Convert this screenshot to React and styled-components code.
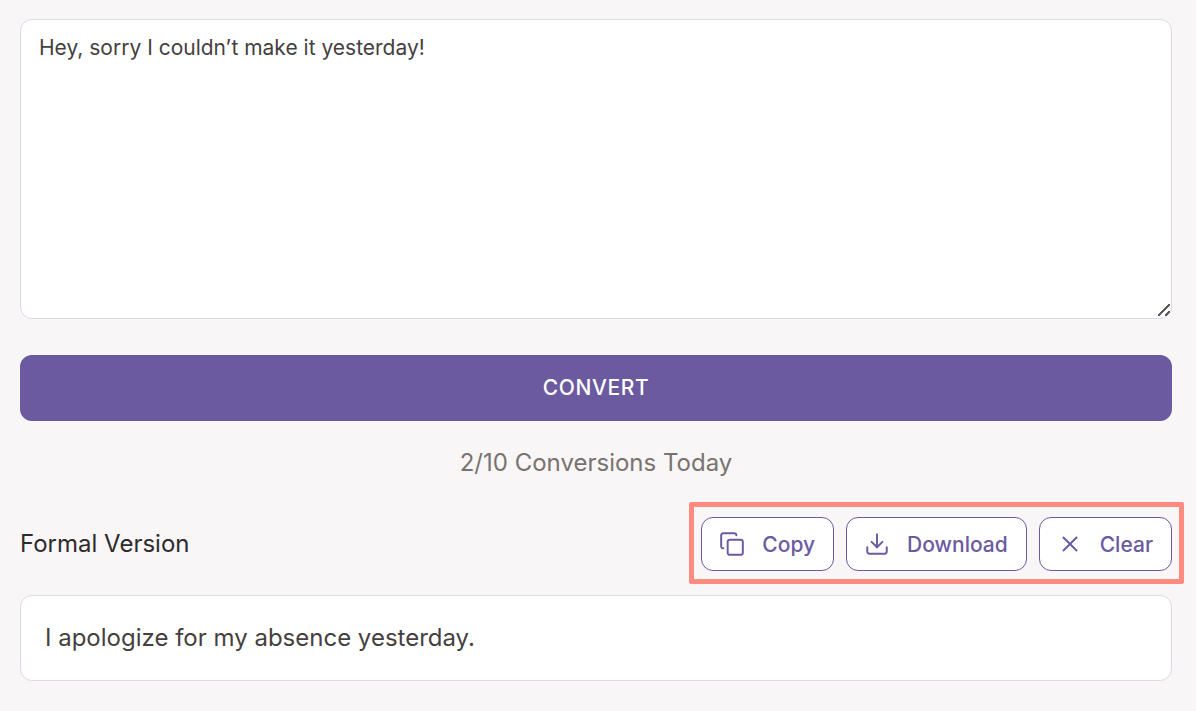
import React from "react";
import styled, { createGlobalStyle } from "styled-components";
import { Copy, Download, X } from "lucide-react";

const GlobalStyle = createGlobalStyle`
  body {
    margin: 0;
    background-color: #f8f6f7;
    font-family: Inter, "Liberation Sans", sans-serif;
  }
`;

const Page = styled.div`
  display: flex;
  flex-direction: column;
  padding: 19px 24px 30px 20px;
`;

const InputBox = styled.textarea`
  display: block;
  box-sizing: border-box;
  width: 100%;
  height: 300px;
  padding: 16px 18px;
  border: 1px solid #dcd8ec;
  border-radius: 12px;
  background-color: #fff;
  color: #453f3f;
  font-family: inherit;
  font-size: 21px;
  line-height: 24px;
  outline: none;
  resize: vertical;

  &::-webkit-resizer {
    background:
      linear-gradient(135deg, transparent 43%, #5c5c5c 43%, #5c5c5c 57%, transparent 57%) 2px 1px / 12px 12px no-repeat,
      linear-gradient(135deg, transparent 35%, #5c5c5c 35%, #5c5c5c 65%, transparent 65%) 9px 8px / 5px 5px no-repeat;
  }
`;

const ConvertButton = styled.button`
  height: 66px;
  margin-top: 36px;
  padding: 0 0 2px;
  border: none;
  border-radius: 12px;
  background-color: #6b5aa0;
  color: #fff;
  font-family: inherit;
  font-size: 21px;
  font-weight: 500;
  letter-spacing: 0.6px;
  cursor: pointer;
`;

const Counter = styled.div`
  margin-top: 28px;
  color: #79736f;
  font-size: 24px;
  line-height: 28px;
  text-align: center;
`;

const ResultHeader = styled.div`
  display: flex;
  align-items: center;
  justify-content: space-between;
  margin-top: 40px;
`;

const ResultTitle = styled.h2`
  margin: 0;
  color: #2f2a2a;
  font-size: 24px;
  font-weight: 400;
  line-height: 28px;
`;

const Actions = styled.div`
  position: relative;
  display: flex;
  gap: 12px;

  &::after {
    content: "";
    position: absolute;
    inset: -15px -12px -13px -12px;
    border: 5px solid #ff8a80;
    border-radius: 2px;
    pointer-events: none;
  }
`;

const ActionButton = styled.button`
  display: flex;
  align-items: center;
  gap: 17px;
  height: 54px;
  padding: 0 18px 0 17px;
  border: 1px solid #6b5aa0;
  border-radius: 12px;
  background-color: #fff;
  color: #6b5aa0;
  font-family: inherit;
  font-size: 21px;
  font-weight: 500;
  cursor: pointer;
`;

const ResultBox = styled.div`
  box-sizing: border-box;
  height: 86px;
  margin-top: 24px;
  padding: 0 24px 2px;
  display: flex;
  align-items: center;
  border: 1px solid #dcd8ec;
  border-radius: 12px;
  background-color: #fff;
  color: #453f3f;
  font-size: 24px;
`;

export default function App() {
  return (
    <>
      <GlobalStyle />
      <Page>
        <InputBox defaultValue="Hey, sorry I couldn’t make it yesterday!" />
        <ConvertButton>CONVERT</ConvertButton>
        <Counter>2/10 Conversions Today</Counter>
        <ResultHeader>
          <ResultTitle>Formal Version</ResultTitle>
          <Actions>
            <ActionButton>
              <Copy size={26} strokeWidth={1.8} />
              Copy
            </ActionButton>
            <ActionButton>
              <Download size={26} strokeWidth={1.8} />
              Download
            </ActionButton>
            <ActionButton>
              <X size={26} strokeWidth={1.8} />
              Clear
            </ActionButton>
          </Actions>
        </ResultHeader>
        <ResultBox>I apologize for my absence yesterday.</ResultBox>
      </Page>
    </>
  );
}
